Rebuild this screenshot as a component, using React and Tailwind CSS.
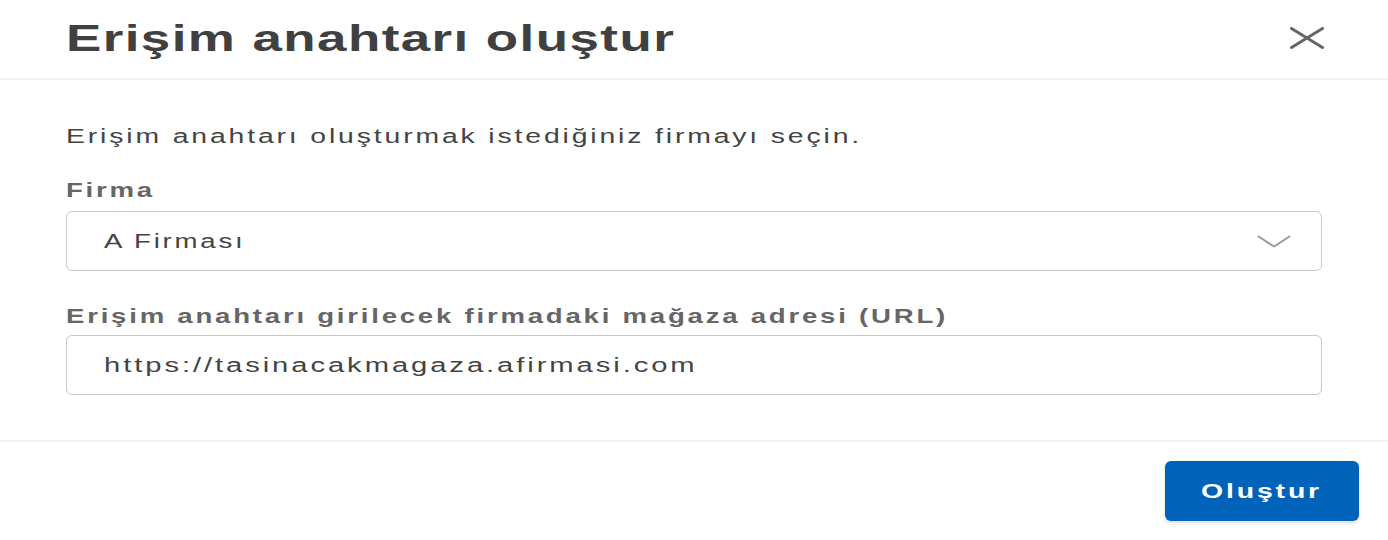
// wide glyphs: every text gets tracking + a horizontal stretch
const wide = 'inline-block origin-left tracking-[2px]'

export default function App() {
  return (
    <div className="w-[1388px] h-[540px] bg-white flex flex-col font-['Liberation_Sans',Arial,sans-serif] text-[#444]">
      {/* header */}
      <div className="h-[80px] flex items-center justify-between pl-[66px] pr-[64px] border-b-2 border-[#f4f4f4]">
        <h1 className="inline-block origin-left tracking-[1px] scale-x-[1.43] text-[37px] font-bold text-[#404040]">Erişim anahtarı oluştur</h1>
        <button className="text-[#666] mb-[2px]">
          <svg width="34" height="22" viewBox="0 0 34 22" fill="none" stroke="currentColor" strokeWidth="3" strokeLinecap="round">
            <path d="M1.5 1.5 L32.5 20.5 M1.5 20.5 L32.5 1.5" />
          </svg>
        </button>
      </div>

      {/* body */}
      <div className="flex-1 px-[66px] pt-[43px] pb-[45px] border-b-2 border-[#f4f4f4]">
        <p className="text-[20px] text-[#444] leading-[26px]">
          <span className={`${wide} scale-x-[1.42]`}>Erişim anahtarı oluşturmak istediğiniz firmayı seçin.</span>
        </p>

        <div className="mt-[30px] flex flex-col gap-[10px]">
          <label className="text-[20px] font-bold text-[#666] leading-[22px]">
            <span className={`${wide} scale-x-[1.38]`}>Firma</span>
          </label>
          <div className="h-[60px] rounded-[6px] border border-[#c8c8c8] flex items-center justify-between pl-[37px] pr-[30px]">
            <span className={`${wide} scale-x-[1.38] text-[20px] text-[#444]`}>A Firması</span>
            <svg width="34" height="13" viewBox="0 0 34 13" fill="none" stroke="#9a9a9a" strokeWidth="2" strokeLinecap="round" strokeLinejoin="round">
              <path d="M1.5 1.5 L17 11.5 L32.5 1.5" />
            </svg>
          </div>
        </div>

        <div className="mt-[34px] flex flex-col gap-[8px]">
          <label className="text-[20px] font-bold text-[#666] leading-[22px]">
            <span className={`${wide} scale-x-[1.38]`}>Erişim anahtarı girilecek firmadaki mağaza adresi (URL)</span>
          </label>
          <div className="h-[60px] rounded-[6px] border border-[#c8c8c8] flex items-center pl-[37px]">
            <span className={`${wide} scale-x-[1.46] text-[20px] text-[#444]`}>https://tasinacakmagaza.afirmasi.com</span>
          </div>
        </div>
      </div>

      {/* footer */}
      <div className="h-[98px] flex items-center justify-end pr-[29px]">
        <button className="w-[194px] h-[60px] rounded-[6px] bg-[#0062b8] text-white text-[20px] font-bold shadow-[0_2px_4px_rgba(0,0,0,0.15)]">
          <span className="inline-block origin-center tracking-[2px] scale-x-[1.42]">Oluştur</span>
        </button>
      </div>
    </div>
  )
}
